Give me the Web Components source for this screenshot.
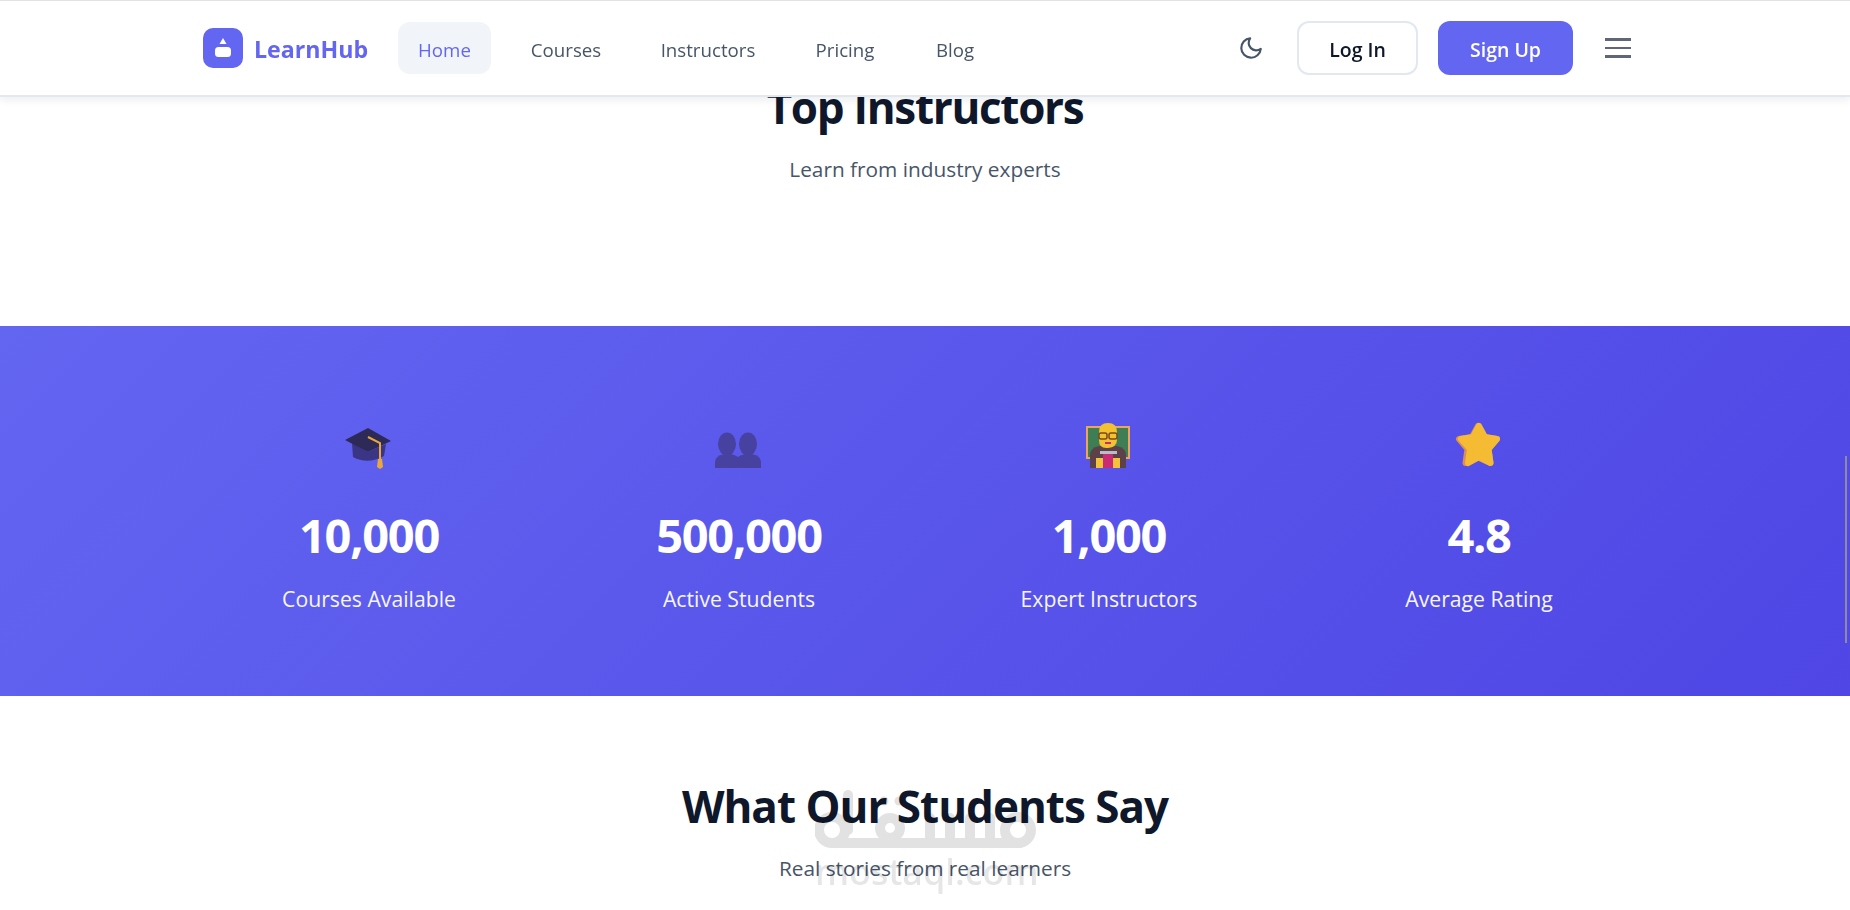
<!DOCTYPE html>
<html lang="en">
<head>
<meta charset="utf-8">
<title>LearnHub</title>
<style>
  html, body { margin: 0; height: 910px; overflow: hidden; background: #fff; }
  body { font-family: "Open Sans", "Noto Sans", sans-serif; color: #0f172a; }
</style>
</head>
<body>
<site-nav></site-nav>
<page-main>
  <section-head title="Top Instructors" text="Learn from industry experts" pad="79px 0 0" style="height:326px;--track:-1.3px"></section-head>
  <stats-band>
    <stat-item num="10,000" label="Courses Available"><svg viewBox="0 0 48 48" width="48" height="48"><path d="M7 22l1 14q15 8 31-1l2-12-18 8z" fill="#3a3585"/><path d="M0 19 23 7l23 13-23 11z" fill="#2d2a58"/><path d="M23 16l12 6v17" fill="none" stroke="#eba83a" stroke-width="2"/><path d="M33 38h4l1 8-3 2-3-2z" fill="#eba83a"/></svg></stat-item>
    <stat-item num="500,000" label="Active Students"><svg viewBox="0 0 48 48" width="48" height="48"><g fill="#47429f"><ellipse cx="12" cy="23" rx="9" ry="11.500"/><path d="M0 47v-6q0-6 9-8h7q8 2 9 6v8z"/><ellipse cx="33" cy="23" rx="9" ry="11.500"/><path d="M21 47v-8q1-4 9-6h7q9 2 9 8v6z"/></g></svg></stat-item>
    <stat-item num="1,000" label="Expert Instructors"><svg viewBox="0 0 48 48" width="48" height="48"><rect x="1" y="5" width="44" height="33" fill="#eda45b"/><rect x="3" y="7" width="40" height="29" fill="#3f7d55"/><path d="M5 47V34q0-7 9-9h18q9 2 9 9v13z" fill="#5c4148"/><rect x="11" y="37" width="24" height="10" fill="#f3c43b"/><rect x="18" y="33" width="10" height="14" fill="#c92c72"/><rect x="15" y="30" width="17" height="3" fill="#b9bcc9"/><path d="M14 11q0-9 9-9t9 9v8q0 7-9 8t-9-8z" fill="#f4c130"/><g fill="none" stroke="#7a4a1e" stroke-width="1.500"><rect x="14" y="12" width="8" height="6" rx="2"/><rect x="24" y="12" width="8" height="6" rx="2"/></g><path d="M20 22h6" stroke="#c92c72" stroke-width="2"/></svg></stat-item>
    <stat-item num="4.8" label="Average Rating"><svg viewBox="0 0 48 48" width="48" height="48"><g stroke-width="6" stroke-linejoin="round"><path d="M23 5l6 11 13 2-8.500 10 2 14L23 36.500 10.500 42l2-14L4 18l13-2z" fill="#d98f55" stroke="#d98f55"/><path d="M24 5l6 11 12 2-8.500 10 2 14-11.500-6-11 6 2-14L6 18l12-2z" fill="#f4bb33" stroke="#f4bb33"/></g></svg></stat-item>
  </stats-band>
  <section-head title="What Our Students Say" text="Real stories from real learners" pad="82px 0 0"></section-head>
</page-main>
<water-mark></water-mark>
<scroll-thumb></scroll-thumb>

<script>
class SiteNav extends HTMLElement {
  constructor() {
    super();
    this.attachShadow({ mode: 'open' });
    this.shadowRoot.innerHTML = `
    <style>
      :host { display: block; position: fixed; top: 0; left: 0; right: 0; z-index: 5; height: 97px; background: #fff;
        border-top: 1px solid #e2e2e2; box-sizing: border-box; border-bottom: 2px solid #e2e8f0;
        box-shadow: 0 3px 8px rgba(15,23,42,.08); }
      .bar { width: 1444px; height: 94px; margin: 0 auto; display: flex; align-items: center; }
      .logo { display: flex; align-items: center; gap: 11px; font-size: 23.2px; font-weight: 700; color: #6366f1; width: 175px; margin-right: 20px; white-space: nowrap; }
      .logo span { padding-top: 2px; }
      .links { display: flex; gap: 20px; }
      .links a { box-sizing: border-box; padding: 14px 0 10px; text-align: center; font-size: 18.7px; line-height: 28px; color: #475569; border-radius: 12px; }
      .links a.on { background: #f1f5f9; color: #6366f1; }
      .right { margin-left: auto; display: flex; align-items: center; padding-right: 16px; }
      .moon { margin-left: 1px; }
      .btn { box-sizing: border-box; height: 54px; padding-top: 2px; border-radius: 12px; font-size: 19.5px; font-weight: 600; display: flex; align-items: center; justify-content: center; }
      .login { width: 121px; border: 2px solid #e2e8f0; color: #0f172a; margin: 0 20px 0 33px; }
      .signup { width: 135px; background: #6366f1; color: #fff; margin-right: 32px; }
      .burger { width: 26px; display: flex; flex-direction: column; gap: 6px; }
      .burger i { height: 2.500px; background: #5e6678; display: block; }
      svg { display: block; }
    </style>
    <div class="bar">
      <div class="logo">
        <svg viewBox="0 0 40 40" width="40" height="40"><rect width="40" height="40" rx="10" fill="#6366f1"/><path d="M20 10l3.500 6h-7z" fill="#fff"/><rect x="12" y="19" width="16" height="10" rx="3.500" fill="#fff"/></svg>
        <span>LearnHub</span>
      </div>
      <div class="links">
        <a class="on" style="width:93px">Home</a><a style="width:110px">Courses</a><a style="width:134px">Instructors</a><a style="width:100px">Pricing</a><a style="width:80px">Blog</a>
      </div>
      <div class="right">
        <svg class="moon" viewBox="0 0 24 24" width="26" height="26" fill="none" stroke="#475569" stroke-width="2" stroke-linecap="round" stroke-linejoin="round"><path d="M21 12.790A9 9 0 1 1 11.210 3 7 7 0 0 0 21 12.790z"/></svg>
        <div class="btn login">Log In</div>
        <div class="btn signup">Sign Up</div>
        <div class="burger"><i></i><i></i><i></i></div>
      </div>
    </div>`;
  }
}

class PageMain extends HTMLElement {
  constructor() {
    super();
    this.attachShadow({ mode: 'open' });
    this.shadowRoot.innerHTML = `<style>:host { display: block; }</style><slot></slot>`;
  }
}

class SectionHead extends HTMLElement {
  constructor() {
    super();
    this.attachShadow({ mode: 'open' });
  }
  connectedCallback() {
    this.shadowRoot.innerHTML = `
    <style>
      :host { display: block; box-sizing: border-box; text-align: center; padding: ${this.getAttribute('pad')}; }
      h2 { margin: 0 0 18px; font-size: 44px; line-height: 56px; font-weight: 700; letter-spacing: var(--track, -1px); color: #0f172a; }
      p { margin: 0; font-size: 20.8px; line-height: 32px; color: #475569; }
    </style>
    <h2>${this.getAttribute('title')}</h2>
    <p>${this.getAttribute('text')}</p>`;
  }
}

class StatsBand extends HTMLElement {
  constructor() {
    super();
    this.attachShadow({ mode: 'open' });
    this.shadowRoot.innerHTML = `
    <style>
      :host { display: block; height: 370px; box-sizing: border-box; padding-top: 95px;
        background: linear-gradient(135deg, #6366f1 0%, #4f46e5 100%); }
      .grid { width: 1432px; margin: 0 auto; display: grid; grid-template-columns: repeat(4, 1fr); gap: 48px; transform: translateX(-1px); }
    </style>
    <div class="grid"><slot></slot></div>`;
  }
}

class StatItem extends HTMLElement {
  constructor() {
    super();
    this.attachShadow({ mode: 'open' });
  }
  connectedCallback() {
    this.shadowRoot.innerHTML = `
    <style>
      :host { display: block; text-align: center; color: #fff; }
      .icon { height: 48px; display: flex; justify-content: center; margin-bottom: 33px; }
      .num { font-size: 47px; line-height: 67px; font-weight: 700; letter-spacing: -1.300px; margin-bottom: 14px; }
      .label { font-size: 21.200px; line-height: 32px; opacity: .95; }
    </style>
    <div class="icon"><slot></slot></div>
    <div class="num">${this.getAttribute('num')}</div>
    <div class="label">${this.getAttribute('label')}</div>`;
  }
}

class WaterMark extends HTMLElement {
  constructor() {
    super();
    this.attachShadow({ mode: 'open' });
    this.shadowRoot.innerHTML = `
    <style>
      :host { display: block; position: fixed; left: 815px; top: 790px; width: 222px; height: 104px; z-index: 2; pointer-events: none; mix-blend-mode: multiply; }
      svg { display: block; }
      div { font-size: 36px; line-height: 36px; font-family: "Noto Sans", sans-serif; font-weight: 500; color: #e6e6e6; text-align: center; margin-top: 0; white-space: nowrap; }
    </style>
    <svg viewBox="0 0 222 64" width="222" height="64" fill="none" stroke="#e2e2e2" stroke-width="10" stroke-linecap="round">
      <circle cx="17" cy="40" r="13"/><path d="M33 5v35"/><path d="M17 53h188"/><circle cx="203" cy="40" r="13"/>
      <circle cx="75" cy="38" r="10"/><path d="M115 28v25M135 28v25M155 28v25M175 28v25"/>
      <g fill="#e2e2e2" stroke="none"><circle cx="69" cy="11" r="4.500"/><circle cx="84" cy="11" r="4.500"/></g>
    </svg>
    <div>mostaql.com</div>`;
  }
}

class ScrollThumb extends HTMLElement {
  constructor() {
    super();
    this.attachShadow({ mode: 'open' });
    this.shadowRoot.innerHTML = `<style>:host { display: block; position: fixed; left: 1845px; top: 456px; width: 2px; height: 187px; background: #8c8c9e; }</style>`;
  }
}

customElements.define('site-nav', SiteNav);
customElements.define('page-main', PageMain);
customElements.define('section-head', SectionHead);
customElements.define('stats-band', StatsBand);
customElements.define('stat-item', StatItem);
customElements.define('water-mark', WaterMark);
customElements.define('scroll-thumb', ScrollThumb);
</script>
</body>
</html>
